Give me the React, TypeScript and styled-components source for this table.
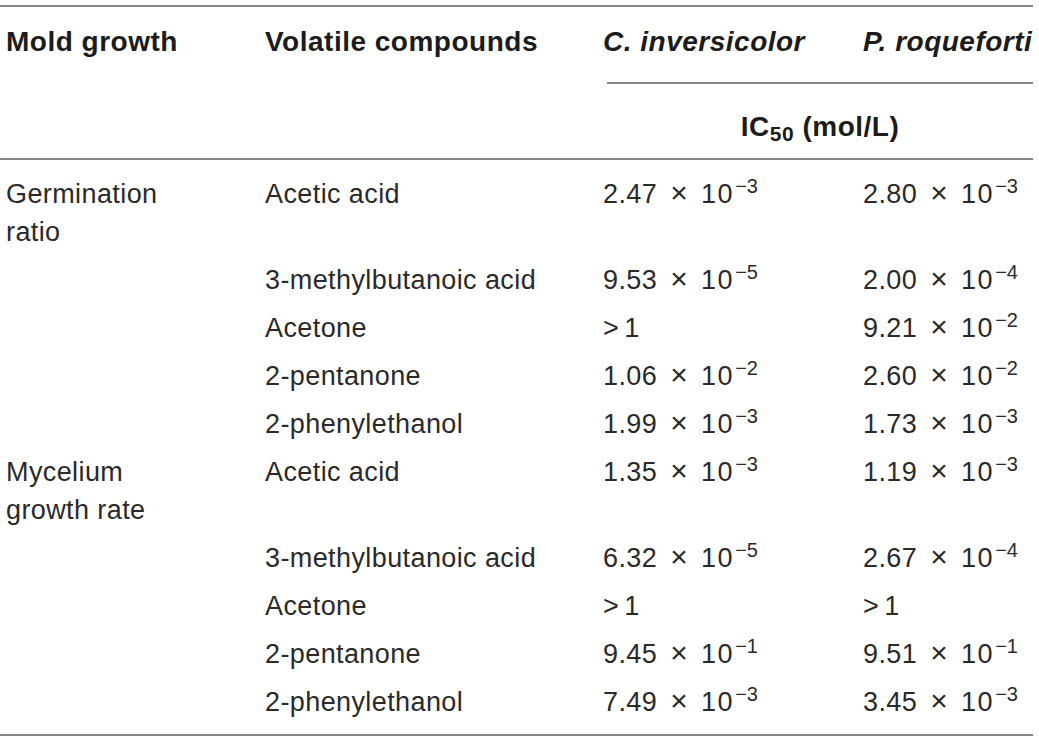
import React from 'react';
import styled, { createGlobalStyle } from 'styled-components';

const GlobalStyle = createGlobalStyle`
  body {
    margin: 0;
    background: #ffffff;
    font-family: "Liberation Sans", Arial, sans-serif;
  }
`;

const COLUMNS = '265px 338px 260px 170px';

const Page = styled.div`
  padding-top: 5px;
`;

const Table = styled.div`
  width: 1033px;
  border-top: 2px solid #858585;
  border-bottom: 2px solid #858585;
  color: #2a2a2a;
`;

const Head = styled.div`
  border-bottom: 2px solid #858585;
  color: #1c1c1c;
  font-weight: 700;
  font-size: 28px;
  letter-spacing: 0.5px;
`;

const HeadRow = styled.div`
  display: grid;
  grid-template-columns: ${COLUMNS};
  line-height: 36px;
  padding: 17px 0 22px;
`;

const HeadCell = styled.div<{ $italic?: boolean; $first?: boolean }>`
  padding-left: ${(p) => (p.$first ? '6px' : '0')};
  font-style: ${(p) => (p.$italic ? 'italic' : 'normal')};
  white-space: nowrap;
`;

const UnitRow = styled.div`
  display: grid;
  grid-template-columns: ${COLUMNS};
`;

const UnitCell = styled.div`
  grid-column: 3 / span 2;
  margin-left: 4px;
  border-top: 2px solid #858585;
  padding: 25px 0 13px;
  line-height: 36px;
  text-align: center;
`;

const Sub = styled.span`
  font-size: 21px;
  vertical-align: -5px;
  line-height: 0;
`;

const Body = styled.div`
  padding: 10px 0 8px;
  font-size: 27px;
  letter-spacing: 0.4px;
`;

const Row = styled.div`
  display: grid;
  grid-template-columns: ${COLUMNS};
  line-height: 38px;
  padding: 5px 0;
`;

const GroupCell = styled.div`
  padding-left: 6px;
`;

const Cell = styled.div`
  white-space: nowrap;
  height: 38px;
`;

const Times = styled.span`
  font-size: 30px;
  line-height: 0;
  margin: 0 13px;
`;

const Ten = styled.span`
  letter-spacing: 1.5px;
`;

const Sup = styled.span`
  font-size: 20px;
  margin-left: 1px;
  vertical-align: 10px;
  line-height: 0;
  letter-spacing: 0;
`;

const Gt = styled.span`
  margin-right: 5px;
`;

type Value = [string, string] | 'gt1';

const Sci: React.FC<{ value: Value }> = ({ value }) => {
  if (value === 'gt1') {
    return (
      <Cell>
        <Gt>&gt;</Gt>1
      </Cell>
    );
  }
  return (
    <Cell>
      {value[0]}
      <Times>×</Times>
      <Ten>10</Ten>
      <Sup>−{value[1]}</Sup>
    </Cell>
  );
};

interface Entry {
  compound: string;
  c: Value;
  p: Value;
}

interface Group {
  label: string[];
  entries: Entry[];
}

const groups: Group[] = [
  {
    label: ['Germination', 'ratio'],
    entries: [
      { compound: 'Acetic acid', c: ['2.47', '3'], p: ['2.80', '3'] },
      { compound: '3-methylbutanoic acid', c: ['9.53', '5'], p: ['2.00', '4'] },
      { compound: 'Acetone', c: 'gt1', p: ['9.21', '2'] },
      { compound: '2-pentanone', c: ['1.06', '2'], p: ['2.60', '2'] },
      { compound: '2-phenylethanol', c: ['1.99', '3'], p: ['1.73', '3'] },
    ],
  },
  {
    label: ['Mycelium', 'growth rate'],
    entries: [
      { compound: 'Acetic acid', c: ['1.35', '3'], p: ['1.19', '3'] },
      { compound: '3-methylbutanoic acid', c: ['6.32', '5'], p: ['2.67', '4'] },
      { compound: 'Acetone', c: 'gt1', p: 'gt1' },
      { compound: '2-pentanone', c: ['9.45', '1'], p: ['9.51', '1'] },
      { compound: '2-phenylethanol', c: ['7.49', '3'], p: ['3.45', '3'] },
    ],
  },
];

export default function App() {
  return (
    <Page>
      <GlobalStyle />
      <Table>
        <Head>
          <HeadRow>
            <HeadCell $first>Mold growth</HeadCell>
            <HeadCell>Volatile compounds</HeadCell>
            <HeadCell $italic>C. inversicolor</HeadCell>
            <HeadCell $italic>P. roqueforti</HeadCell>
          </HeadRow>
          <UnitRow>
            <UnitCell>
              IC<Sub>50</Sub> (mol/L)
            </UnitCell>
          </UnitRow>
        </Head>
        <Body>
          {groups.map((g) =>
            g.entries.map((e, i) => (
              <Row key={g.label[0] + e.compound}>
                <GroupCell>
                  {i === 0 &&
                    g.label.map((line) => <div key={line}>{line}</div>)}
                </GroupCell>
                <Cell>{e.compound}</Cell>
                <Sci value={e.c} />
                <Sci value={e.p} />
              </Row>
            ))
          )}
        </Body>
      </Table>
    </Page>
  );
}
